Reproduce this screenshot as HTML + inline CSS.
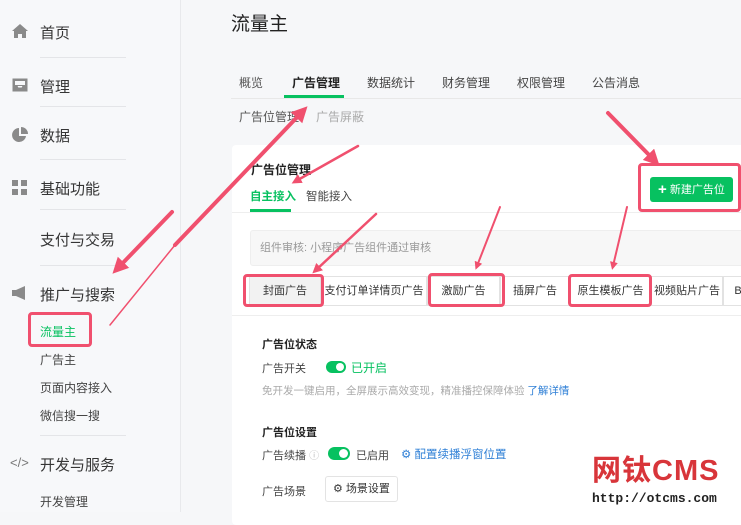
<!DOCTYPE html>
<html><head><meta charset="utf-8"><style>
*{margin:0;padding:0;box-sizing:border-box}
body{width:741px;height:512px;overflow:hidden;background:#f6f7f9;font-family:"Liberation Sans","Noto Sans CJK SC",sans-serif;color:#333;position:relative}
.a{position:absolute;white-space:nowrap}
.side{position:absolute;left:0;top:0;width:181px;height:512px;background:#f7f8fa;border-right:1px solid #e8e9ec}
.sep{position:absolute;left:40px;width:86px;height:1px;background:#e4e5e8}
.m{font-size:15px;color:#353535}
.s{font-size:12px;color:#444}
.card{position:absolute;left:232px;top:145px;width:520px;height:380px;background:#fff;border-radius:4px}
.tab{position:absolute;border:1px solid #e2e2e2;height:30px;top:276px;font-size:11px;line-height:28px;text-align:center;background:#fff}
.box{position:absolute;border:3px solid #f0506e;border-radius:4px}
</style></head><body>
<div class="side"></div>
<svg class="a" style="left:11px;top:23px" width="18" height="16"><path d="M9 1L1 8h2v7h4v-4h4v4h4V8h2z" fill="#8a8a8a"/></svg>
<div class="a m" style="left:40px;top:22px">首页</div>
<div class="sep" style="top:57px"></div>
<svg class="a" style="left:11px;top:77px" width="18" height="16"><path d="M2 2h14v12H2z M2 9h4l1 2h4l1-2h4" fill="#8a8a8a" stroke="#8a8a8a"/><rect x="4" y="4" width="10" height="4" fill="#f7f8fa"/></svg>
<div class="a m" style="left:40px;top:76px">管理</div>
<div class="sep" style="top:106px"></div>
<svg class="a" style="left:11px;top:126px" width="18" height="18"><path d="M8 2a7 7 0 1 0 7 8H8z" fill="#8a8a8a"/><path d="M10 1v7h7a7 7 0 0 0-7-7z" fill="#8a8a8a"/></svg>
<div class="a m" style="left:40px;top:125px">数据</div>
<div class="sep" style="top:159px"></div>
<svg class="a" style="left:12px;top:180px" width="16" height="16"><rect x="0" y="0" width="6" height="6" fill="#8a8a8a"/><rect x="9" y="0" width="6" height="6" fill="#8a8a8a"/><rect x="0" y="9" width="6" height="6" fill="#8a8a8a"/><rect x="9" y="9" width="6" height="6" fill="#8a8a8a"/></svg>
<div class="a m" style="left:40px;top:178px">基础功能</div>
<div class="sep" style="top:209px"></div>
<div class="a m" style="left:40px;top:229px">支付与交易</div>
<div class="sep" style="top:265px"></div>
<svg class="a" style="left:11px;top:285px" width="18" height="16"><path d="M1 5h4l9-4v14l-9-4H1z" fill="#8a8a8a"/></svg>
<div class="a m" style="left:40px;top:284px">推广与搜索</div>
<div class="a s" style="left:40px;top:323px;color:#07c160">流量主</div>
<div class="a s" style="left:40px;top:351px">广告主</div>
<div class="a s" style="left:40px;top:379px">页面内容接入</div>
<div class="a s" style="left:40px;top:407px">微信搜一搜</div>
<div class="sep" style="top:435px"></div>
<div class="a" style="left:10px;top:455px;font-size:13px;color:#777">&lt;/&gt;</div>
<div class="a m" style="left:40px;top:454px">开发与服务</div>
<div class="a s" style="left:40px;top:493px">开发管理</div>

<div class="a" style="left:231px;top:9px;font-size:19px;color:#222">流量主</div>
<div class="a" style="left:231px;top:98px;width:520px;height:1px;background:#e8e8e8"></div>
<div class="a" style="left:239px;top:74px;font-size:12px;color:#555">概览</div>
<div class="a" style="left:292px;top:74px;font-size:12px;font-weight:bold;color:#222">广告管理</div>
<div class="a" style="left:284px;top:95px;width:60px;height:3px;background:#07c160"></div>
<div class="a" style="left:367px;top:74px;font-size:12px;color:#444">数据统计</div>
<div class="a" style="left:442px;top:74px;font-size:12px;color:#444">财务管理</div>
<div class="a" style="left:517px;top:74px;font-size:12px;color:#444">权限管理</div>
<div class="a" style="left:592px;top:74px;font-size:12px;color:#444">公告消息</div>
<div class="a" style="left:239px;top:108px;font-size:12px;color:#555">广告位管理</div>
<div class="a" style="left:316px;top:108px;font-size:12px;color:#aaa">广告屏蔽</div>

<div class="card"></div>
<div class="a" style="left:251px;top:161px;font-size:12px;font-weight:bold;color:#222">广告位管理</div>
<div class="a" style="left:250px;top:188px;font-size:11.5px;font-weight:bold;color:#07c160">自主接入</div>
<div class="a" style="left:250px;top:209px;width:41px;height:3px;background:#07c160"></div>
<div class="a" style="left:306px;top:188px;font-size:11.5px;color:#444">智能接入</div>
<div class="a" style="left:232px;top:212px;width:509px;height:1px;background:#eee"></div>
<div class="a" style="left:650px;top:177px;width:83px;height:25px;background:#07c160;border-radius:3px;color:#fff;font-size:11px;line-height:25px;padding-left:8px"><b style="font-size:15px;vertical-align:-1px">+</b> 新建广告位</div>
<div class="a" style="left:250px;top:230px;width:500px;height:36px;background:#f7f7f7;border:1px solid #eee;border-radius:3px;font-size:11px;color:#999;line-height:34px;padding-left:9px">组件审核: 小程序广告组件通过审核</div>
<div class="tab" style="left:249px;width:72px;background:#f2f2f2">封面广告</div>
<div class="tab" style="left:321px;width:106px">支付订单详情页广告</div>
<div class="tab" style="left:427px;width:73px">激励广告</div>
<div class="tab" style="left:500px;width:70px">插屏广告</div>
<div class="tab" style="left:570px;width:81px">原生模板广告</div>
<div class="tab" style="left:651px;width:72px">视频贴片广告</div>
<div class="tab" style="left:723px;width:30px">B</div>
<div class="a" style="left:232px;top:315px;width:509px;height:1px;background:#eee"></div>

<div class="a" style="left:262px;top:336px;font-size:11px;font-weight:bold;color:#222">广告位状态</div>
<div class="a" style="left:262px;top:360px;font-size:11px;color:#444">广告开关</div>
<div class="a" style="left:326px;top:361px;width:20px;height:12px;border-radius:6px;background:#07c160"><div style="position:absolute;right:2px;top:2px;width:8px;height:8px;border-radius:50%;background:#fff"></div></div>
<div class="a" style="left:351px;top:359px;font-size:12px;color:#07c160">已开启</div>
<div class="a" style="left:262px;top:383px;font-size:10.5px;color:#aaa">免开发一键启用，全屏展示高效变现，精准播控保障体验 <span style="color:#2e7fd6">了解详情</span></div>
<div class="a" style="left:262px;top:424px;font-size:11px;font-weight:bold;color:#222">广告位设置</div>
<div class="a" style="left:262px;top:447px;font-size:11px;color:#444">广告续播 <span style="color:#bbb;font-size:10px">ⓘ</span></div>
<div class="a" style="left:328px;top:447px;width:22px;height:13px;border-radius:7px;background:#07c160"><div style="position:absolute;right:2px;top:2px;width:9px;height:9px;border-radius:50%;background:#fff"></div></div>
<div class="a" style="left:356px;top:447px;font-size:11px;color:#444">已启用</div>
<div class="a" style="left:401px;top:446px;font-size:11.5px;color:#2e7fd6">⚙ 配置续播浮窗位置</div>
<div class="a" style="left:262px;top:483px;font-size:11px;color:#444">广告场景</div>
<div class="a" style="left:325px;top:476px;width:73px;height:26px;border:1px solid #e3e3e3;border-radius:3px;font-size:11px;line-height:24px;padding-left:7px;color:#333">⚙ 场景设置</div>

<div class="a" style="left:592px;top:447px;font-size:29px;font-weight:bold;color:#d8353a;letter-spacing:1px">网钛CMS</div>
<div class="a" style="left:592px;top:491px;font-size:13px;font-family:'Liberation Mono',monospace;font-weight:bold;color:#222">http://otcms.com</div>

<div class="box" style="left:28px;top:312px;width:64px;height:35px"></div>
<div class="box" style="left:243px;top:274px;width:81px;height:33px"></div>
<div class="box" style="left:428px;top:273px;width:77px;height:34px"></div>
<div class="box" style="left:568px;top:274px;width:84px;height:33px"></div>
<div class="box" style="left:638px;top:163px;width:103px;height:49px"></div>

<svg class="a" style="left:0;top:0" width="741" height="512">
<defs><marker id="h" markerWidth="4" markerHeight="4" refX="2" refY="2" orient="auto"><path d="M0 0L4 2L0 4z" fill="#f0506e"/></marker></defs>
<g stroke="#f0506e" fill="none" stroke-linecap="round">
<line x1="172" y1="212" x2="118" y2="268" stroke-width="4" marker-end="url(#h)"/>
<line x1="110" y1="325" x2="175" y2="245" stroke-width="1.5"/>
<line x1="175" y1="245" x2="302" y2="112" stroke-width="4" marker-end="url(#h)"/>
<line x1="358" y1="146" x2="296" y2="181" stroke-width="2.5" marker-end="url(#h)"/>
<line x1="376" y1="214" x2="316" y2="270" stroke-width="2.5" marker-end="url(#h)"/>
<line x1="500" y1="207" x2="477" y2="266" stroke-width="2" marker-end="url(#h)"/>
<line x1="627" y1="207" x2="613" y2="266" stroke-width="2" marker-end="url(#h)"/>
<line x1="608" y1="113" x2="654" y2="160" stroke-width="4" marker-end="url(#h)"/>
</g></svg>
</body></html>
